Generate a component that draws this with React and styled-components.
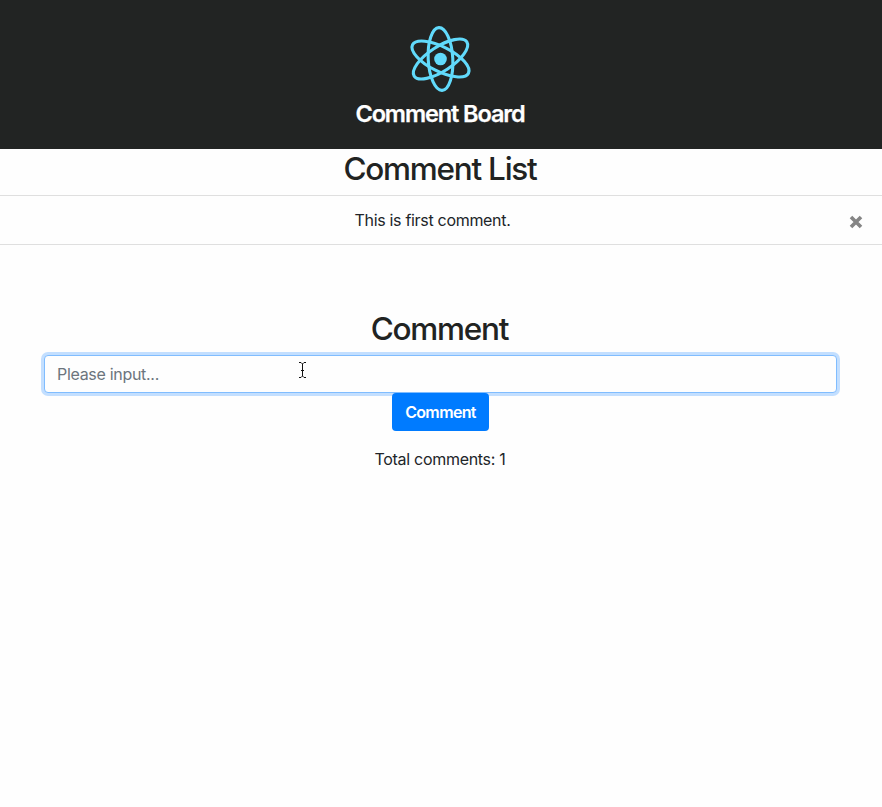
import React from "react";
import styled, { createGlobalStyle } from "styled-components";

const GlobalStyle = createGlobalStyle`
  *, *::before, *::after { box-sizing: border-box; }
  body {
    margin: 0;
    background: #fefefe;
    color: #212529;
    font: 400 16px/1.5 Inter, "Liberation Sans", sans-serif;
    text-align: center;
  }
`;

const Page = styled.div`
  position: relative;
  min-height: 807px;
  overflow: hidden;
`;

const Header = styled.header`
  height: 149px;
  padding-top: 19px;
  background: #222423;
  color: #fff;
`;

const Logo = styled.svg`
  display: block;
  width: 80px;
  height: 80px;
  margin: 0 auto;
  transform: translateX(-0.5px);
`;

const BoardTitle = styled.h1`
  margin: 0;
  padding-right: 2px;
  font-size: 23.5px;
  line-height: 29px;
  font-weight: 600;
  letter-spacing: -1.1px;
  -webkit-text-stroke: 0.25px currentColor;
`;

const SectionTitle = styled.h2`
  margin: 0 0 7px;
  padding: 1px 2px 0 0;
  font-size: 31.5px;
  line-height: 38px;
  font-weight: 500;
  color: #212322;
  letter-spacing: -1.25px;
`;

const List = styled.ul`
  margin: 0;
  padding: 0;
  list-style: none;
  border-top: 1px solid #dfdfdf;
`;

const Item = styled.li`
  display: grid;
  grid-template-columns: 32px 1fr 48px;
  align-items: center;
  height: 49px;
  border-bottom: 1px solid #dfdfdf;
`;

const ItemText = styled.span`
  grid-column: 2;
  padding-right: 1px;
  letter-spacing: -0.31px;
`;

const CloseButton = styled.button`
  display: flex;
  justify-content: center;
  padding: 3px 0 0;
  border: 0;
  background: none;
  margin-right: 5px;
`;

const Form = styled.form`
  display: flex;
  flex-direction: column;
  align-items: center;
  margin: 64px 45px 0 44px;
`;

const Input = styled.input`
  width: 100%;
  height: 38px;
  padding: 6px 12px;
  border: 1px solid #80bdff;
  border-radius: 4px;
  outline: 0;
  background: #fefefe;
  box-shadow: 0 0 0 3px #c3dfff;
  font: inherit;
  letter-spacing: -0.3px;
  &::placeholder { color: #6c757d; opacity: 1; }
`;

const SubmitButton = styled.button`
  position: relative;
  width: 97px;
  height: 38px;
  padding: 0;
  border: 0;
  border-radius: 4px;
  background: #007bff;
  color: #fff;
  font: inherit;
  font-weight: 600;
  letter-spacing: -0.65px;
`;

const Total = styled.p`
  margin: 16px 0 0;
  padding-right: 2px;
  letter-spacing: -0.3px;
`;

const TextCursor = styled.svg`
  position: absolute;
  left: 298px;
  top: 362px;
`;

export default function App() {
  return (
    <Page>
      <GlobalStyle />
      <Header>
        <Logo viewBox="-40 -40 80 80" fill="none" stroke="#61dafb" strokeWidth="3.1">
          {[-3, 57, 117].map((angle) => (
            <ellipse key={angle} rx="12.3" ry="31.4" transform={`rotate(${angle})`} />
          ))}
          <circle r="6.3" fill="#61dafb" stroke="none" />
        </Logo>
        <BoardTitle>Comment Board</BoardTitle>
      </Header>
      <SectionTitle>Comment List</SectionTitle>
      <List>
        <Item>
          <ItemText>This is first comment.</ItemText>
          <CloseButton aria-label="Delete comment">
            <svg width="14" height="14" viewBox="0 0 14 14" stroke="#858585" strokeWidth="3.6">
              <path d="M2 2L12 12M12 2L2 12" />
            </svg>
          </CloseButton>
        </Item>
      </List>
      <Form onSubmit={(e) => e.preventDefault()}>
        <SectionTitle>Comment</SectionTitle>
        <Input placeholder="Please input..." />
        <SubmitButton>Comment</SubmitButton>
      </Form>
      <Total>Total comments: 1</Total>
      <TextCursor width="9" height="17" viewBox="0 0 9 17" fill="none" stroke="#111">
        <path d="M1 .5H3L4.5 2L6 .5H8M4.5 2V14M1 15.5H3L4.5 14L6 15.5H8M3 8.5H6" />
      </TextCursor>
    </Page>
  );
}
